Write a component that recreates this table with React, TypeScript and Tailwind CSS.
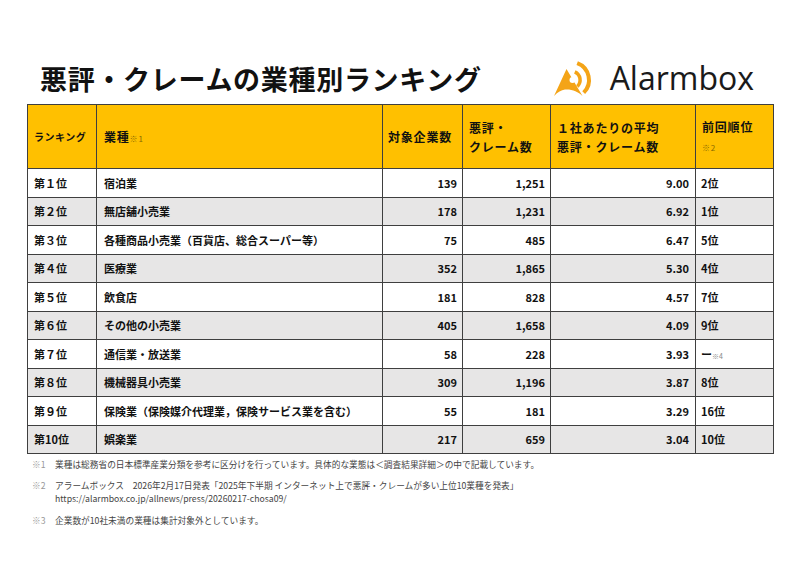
import React from "react";

const rows = [
  { rank: "第１位", name: "宿泊業", count: "139", claims: "1,251", avg: "9.00", prev: "2位" },
  { rank: "第２位", name: "無店舗小売業", count: "178", claims: "1,231", avg: "6.92", prev: "1位" },
  { rank: "第３位", name: "各種商品小売業（百貨店、総合スーパー等）", count: "75", claims: "485", avg: "6.47", prev: "5位" },
  { rank: "第４位", name: "医療業", count: "352", claims: "1,865", avg: "5.30", prev: "4位" },
  { rank: "第５位", name: "飲食店", count: "181", claims: "828", avg: "4.57", prev: "7位" },
  { rank: "第６位", name: "その他の小売業", count: "405", claims: "1,658", avg: "4.09", prev: "9位" },
  { rank: "第７位", name: "通信業・放送業", count: "58", claims: "228", avg: "3.93", prev: "" },
  { rank: "第８位", name: "機械器具小売業", count: "309", claims: "1,196", avg: "3.87", prev: "8位" },
  { rank: "第９位", name: "保険業（保険媒介代理業，保険サービス業を含む）", count: "55", claims: "181", avg: "3.29", prev: "16位" },
  { rank: "第10位", name: "娯楽業", count: "217", claims: "659", avg: "3.04", prev: "10位" },
];

function AlarmboxLogo() {
  return (
    <div className="flex items-center gap-[13px]">
      <svg width="50" height="40" viewBox="0 0 50 40">
        <path
          d="M7 38 L19.5 11 L35.5 38 C31 33.5 25 31 18 31.5 C14 32 11 34 7 38 Z"
          fill="#F4A417"
        />
        <circle cx="25.5" cy="22" r="3" fill="#ffffff" />
        <path d="M27.8 13.8 A9 9 0 0 1 30.4 28.4" fill="none" stroke="#F4A417" strokeWidth="3.5" />
        <path d="M30.2 5.1 A18 18 0 0 1 36.7 34.7" fill="none" stroke="#F4A417" strokeWidth="4" />
      </svg>
      <span className="font-['Open_Sans',sans-serif] text-[32px] leading-none text-[#1a1a1a]">
        Alarmbox
      </span>
    </div>
  );
}

export default function App() {
  return (
    <div className="w-[800px] h-[577px] overflow-hidden bg-white px-[27px] pt-[58px] font-['Noto_Sans_CJK_JP',sans-serif] text-[#111]">
      {/* Title + logo */}
      <div className="flex items-center justify-between h-[40px] pr-[19px]">
        <h1 className="pl-[13px] text-[27px] font-bold leading-none tracking-[0.7px]">
          悪評・クレームの業種別ランキング
        </h1>
        <AlarmboxLogo />
      </div>

      {/* Table */}
      <table className="mt-[6px] w-[746px] table-fixed border-collapse border border-[#3f3f3f]">
        <colgroup>
          <col className="w-[69px]" />
          <col className="w-[286px]" />
          <col className="w-[80px]" />
          <col className="w-[88px]" />
          <col className="w-[145px]" />
          <col className="w-[78px]" />
        </colgroup>
        <thead>
          <tr className="h-[64px] bg-[#FFC000] text-left font-bold">
            <th className="border border-[#3f3f3f] px-[6px] text-[10px] tracking-[0.5px]">ランキング</th>
            <th className="border border-[#3f3f3f] px-[7px] text-[12px] tracking-[0.8px]">
              業種<span className="text-[8px] font-normal text-[#8a6a00]">※1</span>
            </th>
            <th className="border border-[#3f3f3f] px-[5px] text-[12px] tracking-[0.8px]">対象企業数</th>
            <th className="border border-[#3f3f3f] px-[6px] text-[12px] leading-[19px] tracking-[0.8px]">
              悪評・
              <br />
              クレーム数
            </th>
            <th className="border border-[#3f3f3f] px-[6px] text-[12px] leading-[19px] tracking-[0.8px]">
              １社あたりの平均
              <br />
              悪評・クレーム数
            </th>
            <th className="border border-[#3f3f3f] px-[6px] text-[12px] leading-[19px] tracking-[0.8px]">
              前回順位
              <br />
              <span className="text-[8px] font-normal text-[#8a6a00]">※2</span>
            </th>
          </tr>
        </thead>
        <tbody className="text-[11px] font-bold">
          {rows.map((r, i) => (
            <tr key={r.rank} className={`h-[28.5px] ${i % 2 === 1 ? "bg-[#E7E6E6]" : "bg-white"}`}>
              <td className="border border-[#3f3f3f] px-[6px]">{r.rank}</td>
              <td className="border border-[#3f3f3f] px-[7px]">{r.name}</td>
              <td className="border border-[#3f3f3f] px-[5px] text-right">{r.count}</td>
              <td className="border border-[#3f3f3f] px-[5px] text-right">{r.claims}</td>
              <td className="border border-[#3f3f3f] px-[6px] text-right">{r.avg}</td>
              <td className="border border-[#3f3f3f] px-[5px]">
                {r.prev || (
                  <>
                    ー<span className="text-[7px] font-normal text-[#888]">※4</span>
                  </>
                )}
              </td>
            </tr>
          ))}
        </tbody>
      </table>

      {/* Footnotes */}
      <div className="mt-[4px] pl-[5px] text-[8.7px] leading-[13px] text-[#444]">
        <div className="flex">
          <span className="w-[23px] shrink-0 text-[#999]">※1</span>
          <span>業種は総務省の日本標準産業分類を参考に区分けを行っています。具体的な業態は＜調査結果詳細＞の中で記載しています。</span>
        </div>
        <div className="mt-[8px] flex">
          <span className="w-[23px] shrink-0 text-[#999]">※2</span>
          <span>
            アラームボックス　2026年2月17日発表「2025年下半期 インターネット上で悪評・クレームが多い上位10業種を発表」
            <br />
            https://alarmbox.co.jp/allnews/press/20260217-chosa09/
          </span>
        </div>
        <div className="mt-[9px] flex">
          <span className="w-[23px] shrink-0 text-[#999]">※3</span>
          <span>企業数が10社未満の業種は集計対象外としています。</span>
        </div>
      </div>
    </div>
  );
}
